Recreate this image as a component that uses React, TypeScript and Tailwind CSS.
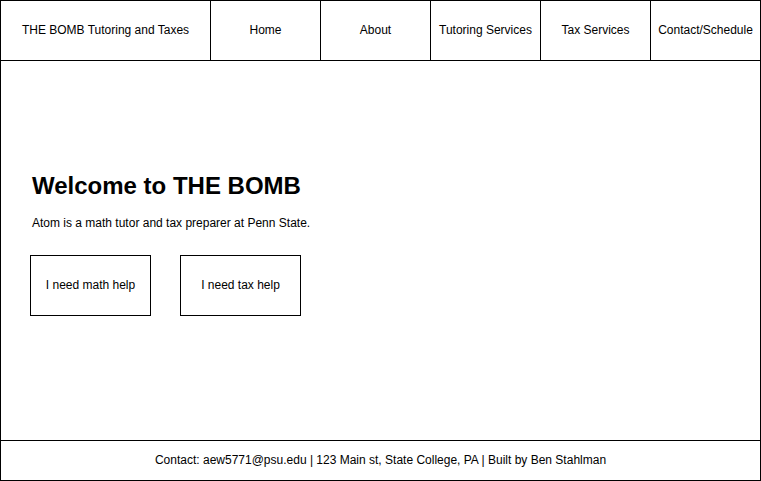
import React from "react";

const navItems = ["Home", "About", "Tutoring Services", "Tax Services", "Contact/Schedule"];

export default function App() {
  return (
    <div
      className="w-[761px] h-[481px] bg-white text-black border border-black flex flex-col"
      style={{ fontFamily: '"Liberation Sans", Arial, sans-serif' }}
    >
      {/* top nav */}
      <header className="flex h-[60px] border-b border-black shrink-0">
        <div className="w-[210px] border-r border-black flex items-center justify-center text-[12px] pb-[2px]">
          THE BOMB Tutoring and Taxes
        </div>
        {navItems.map((item, i) => (
          <a
            key={item}
            href="#"
            className={
              "w-[110px] flex items-center justify-center text-[12px] pb-[2px] " +
              (i < navItems.length - 1 ? "border-r border-black" : "flex-1")
            }
          >
            {item}
          </a>
        ))}
      </header>

      {/* hero */}
      <main className="flex-1 pt-[111px] pl-[29px]">
        <div className="pl-[2px]">
          <h1 className="text-[24px] leading-[28px] font-bold">Welcome to THE BOMB</h1>
          <p className="mt-[15px] text-[12px] leading-[16px]">
            Atom is a math tutor and tax preparer at Penn State.
          </p>
        </div>
        <div className="flex gap-[29px] mt-[24px]">
          <button className="w-[121px] h-[61px] border border-black text-[12px] bg-white pb-[2px]">
            I need math help
          </button>
          <button className="w-[121px] h-[61px] border border-black text-[12px] bg-white pb-[2px]">
            I need tax help
          </button>
        </div>
      </main>

      {/* footer */}
      <footer className="h-[40px] border-t border-black flex items-center justify-center text-[12px] shrink-0 pb-[2px]">
        Contact: aew5771@psu.edu | 123 Main st, State College, PA | Built by Ben Stahlman
      </footer>
    </div>
  );
}
